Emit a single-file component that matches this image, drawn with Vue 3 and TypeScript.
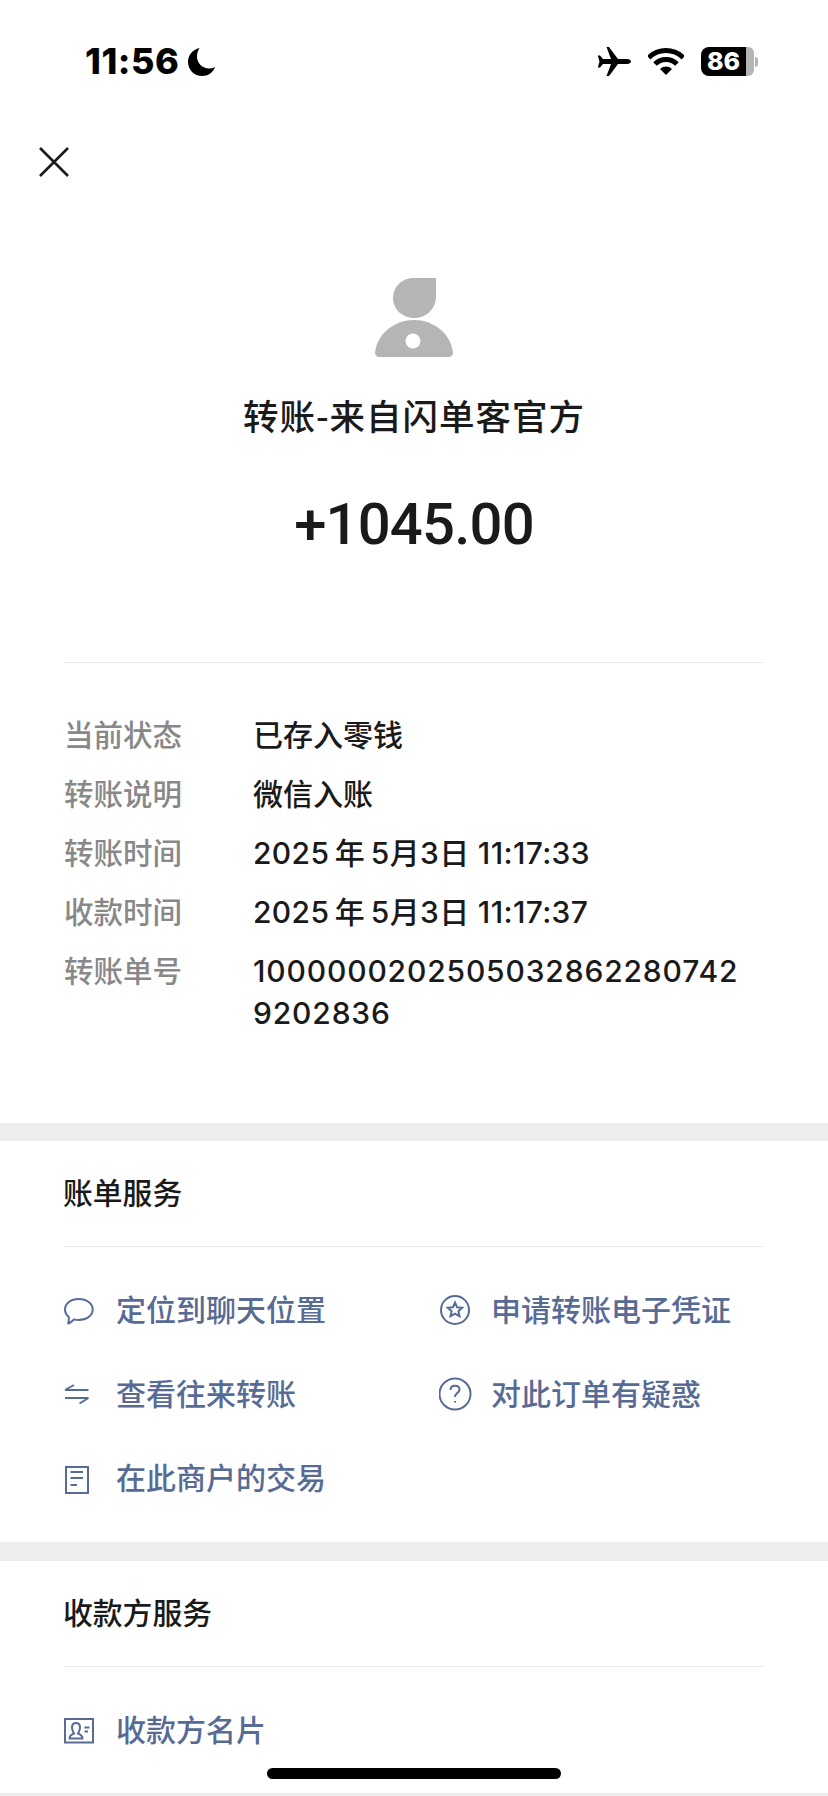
<script setup lang="ts">
interface Row {
  label: string;
  value: string;
  kind?: 'date' | 'serial';
}

interface Action {
  text: string;
  icon: string;
}

const rows: Row[] = [
  { label: '当前状态', value: '已存入零钱' },
  { label: '转账说明', value: '微信入账' },
  { label: '转账时间', value: '2025\u2009年\u20095月3日 11:17:33', kind: 'date' },
  { label: '收款时间', value: '2025\u2009年\u20095月3日 11:17:37', kind: 'date' },
  { label: '转账单号', value: '10000002025050328622807429202836', kind: 'serial' },
];

// every icon is drawn in a 34x34 box
const icons: Record<string, string[]> = {
  chat: [
    'M14.7 6C22.6 6 28.7 10.6 28.7 16.5 28.7 22.4 22.6 27 14.7 27 13 27 11.5 26.8 10 26.4 8.3 28 6.5 29.5 4.5 30.5 4.3 30.6 4.1 30.4 4.2 30.2 4.8 28 5 26 4.8 24 2.4 22 1 19.4 1 16.5 1 10.6 6.8 6 14.7 6Z',
  ],
  star: [
    'M16 3A14 14 0 1 0 16 31 14 14 0 1 0 16 3Z',
    'M16 9.5L18.1 14.3 23.2 14.8 19.4 18.2 20.5 23.3 16 20.6 11.5 23.3 12.6 18.2 8.8 14.8 13.9 14.3Z',
  ],
  swap: ['M1 13H24.5M1 13L10 8', 'M24.5 21H1M24.5 21L15.5 26.5'],
  help: [
    'M16 1.5A15.5 15.5 0 1 0 16 32.5 15.5 15.5 0 1 0 16 1.5Z',
    'M11.5 13C11.5 10.3 13.4 8.8 16 8.8 18.6 8.8 20.5 10.3 20.5 12.6 20.5 14.5 19.4 15.4 18 16.4 16.6 17.4 16 18.2 16 20',
    'M16 24V25.4',
  ],
  doc: [
    'M2 6H24V32H2Z',
    'M6.5 11H19',
    'M6.5 17H19',
    'M6.5 24H13',
  ],
  card: [
    'M1 6H29V29.5H1Z',
    'M5.5 25.5C5.5 23 7.5 21.5 10 20.5 9.3 19 8 17.5 8 14.5 8 11.7 9.7 10 12 10 14.3 10 16 11.7 16 14.5 16 17.5 14.7 19 14 20.5 16.5 21.5 18.5 23 18.5 25.5Z',
    'M20.5 14.5H25.5',
    'M20.5 18.5H24',
  ],
};

const billActions: Action[] = [
  { text: '定位到聊天位置', icon: 'chat' },
  { text: '申请转账电子凭证', icon: 'star' },
  { text: '查看往来转账', icon: 'swap' },
  { text: '对此订单有疑惑', icon: 'help' },
  { text: '在此商户的交易', icon: 'doc' },
];

const payeeActions: Action[] = [{ text: '收款方名片', icon: 'card' }];
</script>

<template>
  <div class="page" lang="zh-CN">
    <div class="status">
      <div class="status-left">
        <span class="time">11:56</span>
        <svg class="moon" viewBox="0 0 27 28" width="27" height="28">
          <path d="M11.5 0C4.5 1.5 0 7.3 0 14 0 21.8 6.2 28 14 28 19.8 28 25 24.8 27 19 25 20 23 20.5 21 20.5 14.5 20.5 9 15 9 8.5 9 5 10 2.5 11.5 0Z" />
        </svg>
      </div>
      <div class="status-right">
        <svg viewBox="0 0 34 29" width="34" height="29">
          <path d="M34 14.5C34 16 32 17 30 17H21L12 29H9.5L14 17H6L3 20.5H0.8L2.5 14.5 0.8 8.5H3L6 12H14L9.5 0H12L21 12H30C32 12 34 13 34 14.5Z" />
        </svg>
        <svg class="wifi" viewBox="0 0 36 27" width="36" height="27">
          <path class="arc" d="M0.7 9.7A24.5 24.5 0 0 1 35.3 9.7" />
          <path class="arc" d="M7 16A15.5 15.5 0 0 1 29 16" />
          <path d="M18 27L12 21A8.5 8.5 0 0 1 24 21Z" />
        </svg>
        <div class="battery">
          <span class="battery-fill">86</span>
          <span class="battery-rest"></span>
          <span class="battery-cap"></span>
        </div>
      </div>
    </div>

    <div class="close">
      <svg viewBox="0 0 30 30" width="30" height="30">
        <path d="M1 1L29 29M29 1L1 29" />
      </svg>
    </div>

    <div class="hero">
      <svg class="avatar" viewBox="0 0 78 79" width="78" height="79">
        <path d="M38 0H61V18C61 31 51 40 39.5 40 27 40 18 31 18 20 18 9 27 0 38 0Z" />
        <path d="M0 75C2 55 20 42 39 42 58 42 76 55 78 75 78 77 76 79 74 79H4C2 79 0 77 0 75Z" />
        <circle cx="38" cy="63" r="7.5" fill="#fff" />
      </svg>
      <div class="title">转账-来自闪单客官方</div>
      <div class="amount">+1045.00</div>
    </div>

    <div class="details">
      <div v-for="row in rows" :key="row.label" class="row">
        <span class="label">{{ row.label }}</span>
        <span class="value" :class="row.kind">{{ row.value }}</span>
      </div>
    </div>

    <section class="band">
      <h2 class="head">账单服务</h2>
      <div class="actions bill">
        <div v-for="a in billActions" :key="a.text" class="action">
          <svg class="icon" viewBox="0 0 34 34" width="34" height="34">
            <path v-for="d in icons[a.icon]" :key="d" :d="d" />
          </svg>
          <span class="action-text">{{ a.text }}</span>
        </div>
      </div>
    </section>

    <section class="band">
      <h2 class="head">收款方服务</h2>
      <div class="actions payee">
        <div v-for="a in payeeActions" :key="a.text" class="action">
          <svg class="icon" viewBox="0 0 34 34" width="34" height="34">
            <path v-for="d in icons[a.icon]" :key="d" :d="d" />
          </svg>
          <span class="action-text">{{ a.text }}</span>
        </div>
      </div>
    </section>

    <div class="home-bar"></div>
  </div>
</template>

<style>
html,
body {
  background: #fff;
}
</style>

<style scoped>
.page {
  position: relative;
  height: 1796px;
  overflow: hidden;
  background: #ededed;
  color: #1a1a1a;
  font-family: "Noto Sans CJK SC", "Noto Sans", sans-serif;
}

.status {
  height: 104px;
  box-sizing: border-box;
  padding: 47px 70px 0 85px;
  display: flex;
  justify-content: space-between;
  background: #fff;
  color: #000;
}

.status-left,
.status-right {
  display: flex;
  align-items: center;
  height: 29px;
}

.status-left {
  gap: 9px;
}

.status-right {
  gap: 17px;
}

.status svg {
  fill: #000;
}

.time {
  font-family: Inter, sans-serif;
  font-size: 36px;
  font-weight: 800;
  line-height: 29px;
  letter-spacing: 0.5px;
}

.wifi .arc {
  fill: none;
  stroke: #000;
  stroke-width: 5;
}

.battery {
  display: flex;
  align-items: center;
  height: 29px;
}

.battery-fill {
  width: 45px;
  height: 29px;
  border-radius: 8px 0 0 8px;
  background: #000;
  color: #fff;
  font-family: Inter, sans-serif;
  font-size: 25px;
  font-weight: 800;
  line-height: 29px;
  text-align: center;
}

.battery-rest {
  width: 8px;
  height: 29px;
  border-radius: 0 6px 6px 0;
  background: #b4b4b4;
}

.battery-cap {
  width: 3px;
  height: 10px;
  margin-left: 1px;
  border-radius: 0 3px 3px 0;
  background: #b4b4b4;
}

.close {
  height: 174px;
  padding: 43px 0 0 39px;
  box-sizing: border-box;
  background: #fff;
}

.close svg {
  display: block;
  fill: none;
  stroke: #1a1a1a;
  stroke-width: 2.6;
}

.hero {
  display: flex;
  flex-direction: column;
  align-items: center;
  height: 385px;
  padding: 0 64px;
  background: #fff;
  position: relative;
}

.hero::after {
  content: "";
  position: absolute;
  left: 64px;
  right: 64px;
  bottom: 0;
  height: 1px;
  background: #ececec;
}

.avatar {
  display: block;
  fill: #b5b5b5;
}

.title {
  margin-top: 35px;
  font-size: 35.5px;
  font-weight: 500;
  line-height: 46px;
  letter-spacing: 1px;
}

.amount {
  margin-top: 53px;
  font-family: Roboto, sans-serif;
  font-size: 58px;
  font-weight: 500;
  line-height: 66px;
  letter-spacing: -0.8px;
}

.details {
  display: flex;
  flex-direction: column;
  gap: 17px;
  height: 460px;
  box-sizing: border-box;
  padding: 51px 0 0 64px;
  background: #fff;
}

.row {
  display: grid;
  grid-template-columns: 189px 495px;
  font-size: 30px;
  font-weight: 500;
  line-height: 42px;
}

.label {
  margin-top: -2px;
  color: #888;
  font-size: 29.5px;
}

.value {
  font-family: Inter, "Noto Sans CJK SC", sans-serif;
  word-break: break-all;
}

.date {
  letter-spacing: 0.35px;
}

.serial {
  letter-spacing: 0.85px;
}

.band {
  margin-top: 18px;
  background: #fff;
  padding: 0 64px;
}

.band:last-of-type {
  margin-top: 19px;
  height: 232px;
}

.head {
  margin: 0;
  height: 106px;
  box-sizing: border-box;
  border-bottom: 1px solid #ececec;
  font-size: 29.8px;
  font-weight: 500;
  line-height: 100px;
  text-indent: -1px;
}

.actions {
  display: grid;
  grid-template-columns: 375px 1fr;
  padding: 21px 0 22px;
}

.action {
  display: flex;
  align-items: center;
  height: 84px;
  color: #576b95;
  font-size: 30px;
  font-weight: 500;
}

.action-text {
  margin-bottom: 4px;
}

.icon {
  flex: none;
  margin-right: 18px;
  fill: none;
  stroke: currentColor;
  stroke-width: 2;
}

.home-bar {
  position: absolute;
  left: 267px;
  top: 1768px;
  width: 294px;
  height: 11px;
  border-radius: 6px;
  background: #000;
}
</style>
